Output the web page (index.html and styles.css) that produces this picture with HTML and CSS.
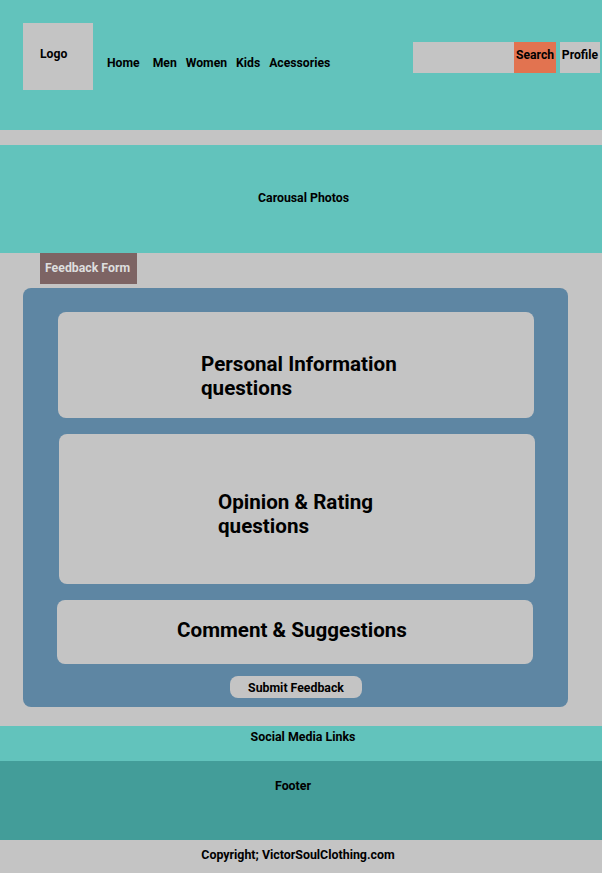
FILE: index.html
```html
<!DOCTYPE html>
<html>
<head>
<meta charset="utf-8">
<link rel="stylesheet" href="styles.css">
</head>
<body>
<header class="header">
  <div class="logo">Logo</div>
  <nav class="nav">
    <a class="nav-link nav-home">Home</a>
    <a class="nav-link">Men</a>
    <a class="nav-link">Women</a>
    <a class="nav-link">Kids</a>
    <a class="nav-link">Acessories</a>
  </nav>
  <div class="tools">
    <div class="search-input"></div>
    <div class="search-btn">Search</div>
    <div class="profile">Profile</div>
  </div>
</header>
<section class="carousel">Carousal Photos</section>
<div class="tab">Feedback Form</div>
<section class="form">
  <div class="card card-personal"><span class="card-text">Personal Information<br>questions</span></div>
  <div class="card card-opinion"><span class="card-text">Opinion &amp; Rating<br>questions</span></div>
  <div class="card card-comment"><span class="card-text">Comment &amp; Suggestions</span></div>
  <div class="submit-row"><div class="submit">Submit Feedback</div></div>
</section>
<section class="social">Social Media Links</section>
<footer class="footer">Footer</footer>
<div class="copyright">Copyright; VictorSoulClothing.com</div>
</body>
</html>
```
FILE: styles.css
```css
* { box-sizing: border-box; }
html, body { margin: 0; padding: 0; }
body {
  background: #C4C4C4;
  font-family: Roboto, "Liberation Sans", sans-serif;
  font-weight: 700;
  color: #000;
  width: 602px;
  height: 873px;
  overflow: hidden;
}
.header {
  height: 130px;
  background: #62C3BC;
  display: flex;
  align-items: flex-start;
  padding: 23px 2px 0 23px;
}
.logo {
  width: 70px;
  height: 67px;
  background: #C4C4C4;
  font-size: 12.2px;
  line-height: 15px;
  padding: 24px 0 0 17px;
}
.nav {
  display: flex;
  margin-left: 14px;
  margin-top: 33px;
  gap: 9px;
  font-size: 12.2px;
  line-height: 15px;
}
.nav-home { margin-right: 4px; }
.tools {
  margin-left: auto;
  margin-top: 19px;
  display: flex;
  height: 31px;
  font-size: 12.2px;
}
.search-input {
  width: 101px;
  background: #C4C4C4;
}
.search-btn {
  width: 42px;
  background: #E27350;
  display: flex;
  align-items: center;
  justify-content: center;
  padding-bottom: 6px;
}
.profile {
  width: 40px;
  margin-left: 4px;
  background: #C4C4C4;
  display: flex;
  align-items: center;
  justify-content: center;
  padding-bottom: 6px;
}
.carousel {
  margin-top: 15px;
  height: 108px;
  background: #62C3BC;
  display: flex;
  align-items: center;
  justify-content: center;
  font-size: 12.3px;
  padding-bottom: 3px;
  padding-left: 5px;
}
.tab {
  margin-left: 40px;
  width: 97px;
  height: 31px;
  background: #7D6464;
  color: #DEDEDE;
  font-size: 12.3px;
  line-height: 15px;
  padding: 8px 0 0 5px;
}
.form {
  margin: 4px 34px 0 23px;
  height: 419px;
  background: #5E86A3;
  border-radius: 8px;
  padding: 24px 0 0 35px;
  display: flex;
  flex-direction: column;
}
.card {
  width: 476px;
  background: #C4C4C4;
  border-radius: 8px;
  font-size: 20.6px;
  line-height: 24px;
  display: flex;
  align-items: center;
}
.card-personal {
  height: 106px;
  padding-left: 143px;
  padding-top: 22px;
}
.card-opinion {
  height: 150px;
  margin-top: 16px;
  margin-left: 1px;
  padding-left: 159px;
  padding-top: 10px;
}
.card-comment {
  height: 64px;
  margin-top: 16px;
  margin-left: -1px;
  justify-content: center;
  padding-right: 6px;
  padding-bottom: 5px;
}
.submit-row {
  margin-top: 12px;
  padding-left: 172px;
}
.submit {
  width: 132px;
  height: 22px;
  background: #C4C4C4;
  border-radius: 8px;
  font-size: 12.3px;
  display: flex;
  align-items: center;
  justify-content: center;
  padding-top: 1px;
}
.social {
  margin-top: 19px;
  height: 35px;
  background: #62C3BC;
  font-size: 12.4px;
  line-height: 14px;
  text-align: center;
  padding-top: 4px;
  padding-left: 4px;
}
.footer {
  height: 79px;
  background: #439D99;
  font-size: 12.4px;
  line-height: 14px;
  text-align: center;
  padding-top: 18px;
  padding-right: 16px;
}
.copyright {
  height: 33px;
  font-size: 12.4px;
  line-height: 14px;
  text-align: center;
  padding-top: 8px;
  padding-right: 6px;
}
```
